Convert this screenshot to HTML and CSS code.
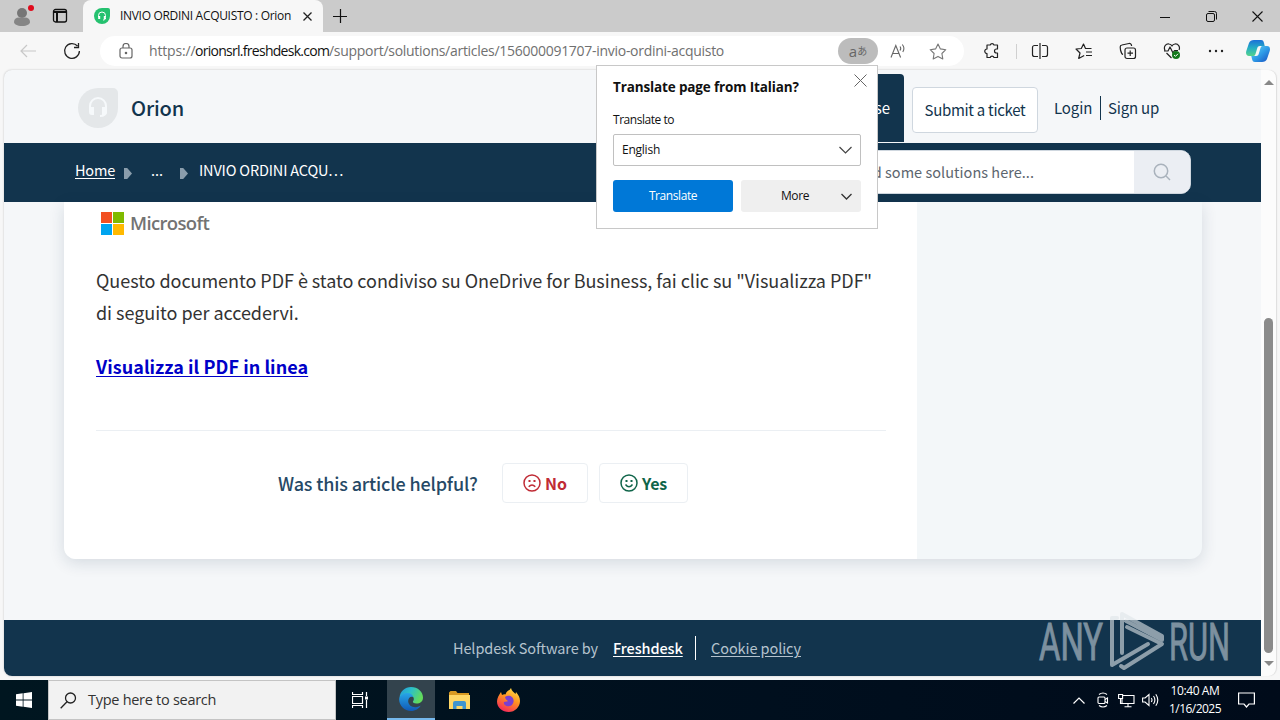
FILE: index.html
```html
<!DOCTYPE html>
<html lang="en">
<head>
<meta charset="utf-8">
<title>INVIO ORDINI ACQUISTO : Orion</title>
<link rel="stylesheet" href="styles.css">
</head>
<body>
<div class="tabbar">
  <div class="tabbar-left">
    <svg class="profile" width="24" height="26" viewBox="0 0 24 26"><circle cx="12" cy="11" r="5" fill="#767676"/><path d="M4 20c0-3 2-4.500 5-4.500h6c3 0 5 1.500 5 4.500 0 2-3 4-8 4s-8-2-8-4z" fill="#858585"/><circle cx="21" cy="6" r="3" fill="#e00b1c"/></svg>
    <svg class="workspaces" width="16" height="16" viewBox="0 0 16 16" fill="none" stroke="#111" stroke-width="1.300"><rect x="1.500" y="1.500" width="13" height="12.500" rx="2"/><path d="M1.500 4h13M5 4v10" stroke-width="2"/></svg>
  </div>
  <div class="tab">
    <svg width="16" height="16" viewBox="0 0 16 16"><path d="M8 0h6a2 2 0 0 1 2 2v6a8 8 0 1 1-8-8z" fill="#25c16f"/><path d="M4.500 9V7.500a3.500 3.500 0 0 1 7 0V9M11.500 10c0 1.500-1 2-2.500 2" fill="none" stroke="#fff" stroke-width="1"/><path d="M4.200 8h2v3h-2zM9.800 8h2v3h-2z" fill="#fff"/></svg>
    <span class="tab-title">INVIO ORDINI ACQUISTO : Orion</span>
    <svg class="tab-x" width="9" height="9" viewBox="0 0 9 9" stroke="#222" stroke-width="1.300"><path d="M.5.5l8 8M8.500.5l-8 8"/></svg>
  </div>
  <svg class="plus" width="14" height="14" viewBox="0 0 14 14" stroke="#111" stroke-width="1.200"><path d="M0 7.500h14M7.500 0v14"/></svg>
  <div class="window-buttons">
    <svg width="11" height="11" viewBox="0 0 11 11" stroke="#111" fill="none"><path d="M0 6.500h10"/></svg>
    <svg width="11" height="11" viewBox="0 0 11 11" stroke="#111" fill="none"><rect x=".5" y="2.500" width="8" height="8" rx="1.500"/><path d="M2.500 .5h6a2 2 0 0 1 2 2v6"/></svg>
    <svg width="11" height="11" viewBox="0 0 11 11" stroke="#111" stroke-width="1.100" fill="none"><path d="M.5.5l10 10M10.500.5l-10 10"/></svg>
  </div>
</div>
<div class="toolbar">
  <svg class="back" width="16" height="14" viewBox="0 0 16 14" fill="none" stroke="#c8c8c8" stroke-width="1.200"><path d="M16 7H1M7 1L1 7l6 6"/></svg>
  <svg class="reload" width="18" height="18" viewBox="0 0 18 18" fill="none" stroke="#222" stroke-width="1.300"><path d="M14.500 4A7.400 7.400 0 1 0 16.400 9M15.500 1v4.500H11"/></svg>
  <div class="address">
    <svg class="lock" width="14" height="16" viewBox="0 0 14 16" fill="none" stroke="#666" stroke-width="1.200"><rect x="1" y="5" width="12" height="10" rx="2"/><path d="M4 5V3.500a3 3 0 0 1 6 0V5"/><circle cx="7" cy="10" r=".7" fill="#666"/></svg>
    <span class="url"><span class="scheme">https://</span><span class="host">orionsrl.freshdesk.com</span><span class="path">/support/solutions/articles/156000091707-invio-ordini-acquisto</span></span>
    <span class="translate-badge"><span class="tb-a">a</span><span class="tb-j">あ</span></span>
    <svg class="read" width="17" height="16" viewBox="0 0 17 16" fill="none" stroke="#666" stroke-width="1.100"><path d="M1 14.500L5.800 2.500l4.800 12M2.700 10.500h6.200M10 3.500q1.500 1.700 0 4M12.300 1.500q3 3.500 .5 7.500"/></svg>
    <svg class="star" width="18" height="17" viewBox="0 0 18 17" fill="none" stroke="#777" stroke-width="1.100" stroke-linejoin="round"><path d="M9 1l2.400 4.900 5.400.8-3.900 3.800.9 5.400L9 13.400l-4.800 2.500.9-5.400L1.200 6.700l5.400-.8z"/></svg>
  </div>
  <div class="actions">
    <svg width="18" height="18" viewBox="0 0 18 18" fill="none" stroke="#222" stroke-width="1.200" stroke-linejoin="round"><path d="M4 3h3.200a2 2 0 0 1 3.800 0h3.500v4h-1a2 2 0 0 0 0 4h1v4.500H11a2 2 0 0 0-3.800 0H4V11.500a2.200 2.200 0 1 1 0-4.500z"/></svg>
    <i class="sep"></i>
    <svg width="18" height="18" viewBox="0 0 18 18" fill="none" stroke="#222" stroke-width="1.200"><path d="M7 3.500H3.500a2 2 0 0 0-2 2v7a2 2 0 0 0 2 2H7M11 3.500h3.500a2 2 0 0 1 2 2v7a2 2 0 0 1-2 2H11M9 1v16"/></svg>
    <svg width="18" height="18" viewBox="0 0 18 18" fill="none" stroke="#222" stroke-width="1.200" stroke-linejoin="round"><path d="M16.500 6.500h-6L8.500 2 6.300 6.500 1 7l4 4-1.300 5.500 5.500-3M11 10h6M11 13.500h6"/></svg>
    <svg width="18" height="18" viewBox="0 0 18 18" fill="none" stroke="#222" stroke-width="1.200"><rect x="6" y="6" width="10.500" height="10.500" rx="2"/><path d="M11.200 8.500v5.500M8.500 11.200H14M4 12.500C2.500 12 2 10 1.500 8L1.200 5a2 2 0 0 1 1.700-2L10 1.500a2 2 0 0 1 2.400 1.500l.2 1"/></svg>
    <svg width="18" height="18" viewBox="0 0 18 18" fill="none" stroke="#222" stroke-width="1.200" stroke-linejoin="round"><path d="M2 8.500C0 4 3.500 1.500 6 2c1.500.2 2.500 1 3 2 .5-1 1.500-1.800 3-2 3-.4 5.500 2.500 4 6M1 9h4l2-4 3 6 1.500-2.500H15M3.500 11l5 5"/><circle cx="13" cy="13" r="4" fill="#14791c" stroke="none"/><path d="M11 13l1.500 1.300 2.500-2.500" stroke="#fff" stroke-width="1"/></svg>
    <svg width="18" height="18" viewBox="0 0 18 18" fill="#222"><circle cx="3" cy="9" r="1.200"/><circle cx="9" cy="9" r="1.200"/><circle cx="15" cy="9" r="1.200"/></svg>
  </div>
  <svg class="copilot" width="24" height="24" viewBox="0 0 24 24"><defs><linearGradient id="ca" x1="0" y1="0" x2="0" y2="1"><stop offset="0" stop-color="#1b70d8"/><stop offset=".5" stop-color="#25aec4"/><stop offset="1" stop-color="#55d38c"/></linearGradient><linearGradient id="cb" x1="0" y1="0" x2="1" y2="1"><stop offset="0" stop-color="#6bd9ef"/><stop offset=".5" stop-color="#2f9de8"/><stop offset="1" stop-color="#174fc0"/></linearGradient></defs><path d="M8 1h7c2 0 2.500 1 3 3l.7 3H14c-2 0-2.500 1-3 3l-1.500 5c-.7 2-1.500 2-3 2H3c-2.500 0-3.500-2-2.700-5L3 4c.8-2 2.500-3 5-3z" fill="url(#ca)"/><path d="M16 23H9c-2 0-2.500-1-3-3l-.7-3H10c2 0 2.500-1 3-3l1.500-5c.7-2 1.500-2 3-2H21c2.500 0 3.500 2 2.700 5L21 20c-.8 2-2.500 3-5 3z" fill="url(#cb)"/></svg>
</div>
<div class="viewport">
  <div class="page">
    <header class="head">
      <svg class="logo" width="40" height="40" viewBox="0 0 40 40"><path d="M20 0h15a5 5 0 0 1 5 5v15A20 20 0 1 1 20 0z" fill="#e4e7e9"/><path d="M12 21v-3a8 8 0 0 1 16 0v3M28 23c0 4-2 5-6 5" fill="none" stroke="#f6f9fb" stroke-width="2"/><path d="M11 19h5v8h-2a3 3 0 0 1-3-3zM24 19h5v5a3 3 0 0 1-3 3h-2z" fill="#f6f9fb"/></svg>
      <span class="brand">Orion</span>
      <nav class="head-nav">
        <span class="kb">Knowledge base</span>
        <span class="submit">Submit a ticket</span>
        <span class="login">Login</span>
        <span class="signup">Sign up</span>
      </nav>
    </header>
    <div class="crumbs">
      <span class="home">Home</span><i class="arrow"></i><span class="dots">...</span><i class="arrow"></i><span class="current">INVIO ORDINI ACQU…</span>
      <div class="search"><div class="search-text">Find some solutions here...</div><div class="search-button"><svg width="18" height="18" viewBox="0 0 18 18" fill="none" stroke="#a9b2bc" stroke-width="1.500"><circle cx="8" cy="8" r="6.700"/><path d="M13 13l4 4"/></svg></div></div>
    </div>
    <main class="content">
      <div class="card">
        <article class="article">
          <div class="ms"><svg width="23" height="23" viewBox="0 0 23 23"><path fill="#f25022" d="M0 0h11v11H0z"/><path fill="#7fba00" d="M12 0h11v11H12z"/><path fill="#00a4ef" d="M0 12h11v11H0z"/><path fill="#ffb900" d="M12 12h11v11H12z"/></svg><span>Microsoft</span></div>
          <p class="text">Questo documento PDF è stato condiviso su OneDrive for Business, fai clic su "Visualizza PDF"<br>di seguito per accedervi.</p>
          <span class="link">Visualizza il PDF in linea</span>
          <div class="feedback">
            <span class="question">Was this article helpful?</span>
            <span class="vote no"><svg width="18" height="18" viewBox="0 0 18 18" fill="none" stroke="currentColor" stroke-width="1.500"><circle cx="9" cy="9" r="8"/><path d="M5.700 12.800q3.300-3.600 6.600 0"/><path d="M5.500 7h2M10.500 7h2" stroke-width="2"/></svg>No</span>
            <span class="vote yes"><svg width="18" height="18" viewBox="0 0 18 18" fill="none" stroke="currentColor" stroke-width="1.500"><circle cx="9" cy="9" r="8"/><path d="M5.500 10.500q3.500 4.600 7 0"/><path d="M5.500 7h2M10.500 7h2" stroke-width="2"/></svg>Yes</span>
          </div>
        </article>
      </div>
    </main>
    <footer class="foot"><span class="by">Helpdesk Software by</span><span class="fd">Freshdesk</span><i></i><span class="cookie">Cookie policy</span></footer>
  </div>
  <div class="scrollbar"><i class="up"></i><i class="thumb"></i><i class="down"></i></div>
</div>
<div class="taskbar">
  <div class="start"><svg width="16" height="16" viewBox="0 0 16 16" fill="#fff"><path d="M0 2.200l6.700-.9v6.300H0zM7.500 1.200L16 0v7.600H7.500zM0 8.400h6.700v6.300L0 13.800zM7.500 8.400H16V16l-8.500-1.200z"/></svg></div>
  <div class="task-search"><svg width="17" height="17" viewBox="0 0 17 17" fill="none" stroke="#222" stroke-width="1.300"><circle cx="10.500" cy="6" r="5"/><path d="M7 9.800L.7 16.300"/></svg><span>Type here to search</span></div>
  <div class="task-item"><svg width="17" height="16" viewBox="0 0 17 16" fill="none" stroke="#fff"><path d="M.5 0v2.500h10V0M.5 16v-2.500h10V16M.5 4.500h10v7H.5zM14.500 0v4M14.500 8v8" stroke-width="1.200"/><path d="M13 6h3" stroke-width="3"/></svg></div>
  <div class="task-item active"><svg width="24" height="24" viewBox="0 0 24 24"><defs><linearGradient id="ea" x1="0" y1="0" x2="1" y2=".4"><stop offset="0" stop-color="#2498dd"/><stop offset=".5" stop-color="#2cc0c8"/><stop offset="1" stop-color="#62db5c"/></linearGradient><linearGradient id="eb" x1="0" y1="0" x2="0" y2="1"><stop offset="0" stop-color="#27a5e8"/><stop offset="1" stop-color="#1159b5"/></linearGradient></defs><path d="M.5 11C1 4 6 0 12 0c7 0 12 5 12 10.500 0 4-3 6-6.500 6-3 0-4-1.300-3.500-2.200 1.200-1.500 1-3 .2-4.300C11 6 4 7 .5 11z" fill="url(#ea)"/><path d="M.2 11.500C1.500 8 5 6 8.500 6c3 0 5 1.500 5.800 4C11 9 9 11.500 9.200 14.500c.3 4 4.500 6.500 8.800 5.500 1.700-.4 2.800-1 3.800-1.500C20 21.500 16.500 24 12 24 5 24-.5 18 .2 11.500z" fill="url(#eb)"/></svg></div>
  <div class="task-item"><svg width="21" height="18" viewBox="0 0 21 18"><path d="M0 1.500L1.500 0H7l1.500 2H20v4H0z" fill="#d99a22"/><path d="M0 4h21v14H0z" fill="#ffd766"/><path d="M4 18v-6a2 2 0 0 1 2-2h9a2 2 0 0 1 2 2v6h-3.500v-3h-6v3z" fill="#3f95d0"/></svg></div>
  <div class="task-item"><svg width="23" height="24" viewBox="0 0 23 24"><defs><linearGradient id="fa" x1=".8" y1="0" x2=".3" y2="1"><stop offset="0" stop-color="#ffe14a"/><stop offset=".45" stop-color="#ff9420"/><stop offset="1" stop-color="#f5265b"/></linearGradient></defs><path d="M4 4l1 3c1-.5 2-.8 3.500-.6C9 4 11 2.500 12.500 2L14 0c.5 3 3 4 4.500 6l.5-2c2.500 3 4 5.500 4 9 0 6-5 11-11.300 11S0 19.500 0 13.500C0 10 2 7 4 4z" fill="url(#fa)"/><path d="M8 9c4-3 9.500 0 8.500 5-.7 3.500-4 5-7 4-2.500-1-3-3-2.500-4l4-.8C10 12 8 11 8 9z" fill="#7a3fd0"/></svg></div>
  <div class="tray">
    <svg width="12" height="7" viewBox="0 0 12 7" fill="none" stroke="#fff" stroke-width="1.200"><path d="M.5 6.500L6 1l5.500 5.500"/></svg>
    <svg class="meet" width="12" height="16" viewBox="0 0 12 16" fill="none" stroke="#fff" stroke-width="1.100"><rect x="1" y="5" width="7" height="6.500" rx="1"/><path d="M8 7.500l2.500-1.500v5L8 9.500M2 2.500Q6-.5 10 2.500M2 13.500q4 3 8 0"/></svg>
    <svg class="network" width="17" height="15" viewBox="0 0 17 15" fill="none" stroke="#fff" stroke-width="1.100"><path d="M5 2.500h11v8H4V6M10 10.500v3M6.500 13.800h7M.6 1.500h4v4h-4zM2.500 5.500v5h2"/></svg>
    <svg class="volume" width="17" height="14" viewBox="0 0 17 14" fill="none" stroke="#fff" stroke-width="1.100"><path d="M.6 5v4h2.500L7 12.500v-11L3.100 5zM9.300 5q1.400 2 0 4M11.500 3q2.800 4 0 8M13.800 1.200q4 5.800 0 11.600"/></svg>
    <div class="clock"><span class="time">10:40 AM</span><span class="date">1/16/2025</span></div>
    <svg class="note" width="17" height="16" viewBox="0 0 17 16" fill="none" stroke="#fff" stroke-width="1.200"><path d="M.6 1h15.800v11H11l-2.500 3L6 12H.6z"/></svg>
  </div>
</div>
<div class="popup">
  <svg class="close" width="13" height="13" viewBox="0 0 13 13" stroke="#666"><path d="M.5.5l12 12M12.500.5l-12 12"/></svg>
  <div class="popup-title">Translate page from Italian?</div>
  <div class="popup-label">Translate to</div>
  <div class="select"><span>English</span><svg width="13" height="8" viewBox="0 0 13 8" fill="none" stroke="#444" stroke-width="1.200"><path d="M.5 1l6 6 6-6"/></svg></div>
  <div class="popup-buttons"><div class="primary">Translate</div><div class="more"><span>More</span><svg width="11" height="7" viewBox="0 0 11 7" fill="none" stroke="#333" stroke-width="1.300"><path d="M.5 1l5 5 5-5"/></svg></div></div>
</div>
<svg class="watermark" width="194" height="64" viewBox="0 0 194 64">
  <g fill="#c3ced6" stroke="#c3ced6" stroke-width=".9" font-family="Roboto" font-weight="400" font-size="52"><text x="1" y="50.500" textLength="64" lengthAdjust="spacingAndGlyphs">ANY</text><text x="131" y="50.500" textLength="61" lengthAdjust="spacingAndGlyphs">RUN</text></g>
  <g fill="none" stroke="#dfe5e9" stroke-width="4" stroke-linejoin="round" stroke-linecap="round"><path d="M79 9h-5v47l36-21M84 44V5l40 22v4L88 12"/><path d="M89 18l35 17-38 24-3-2"/></g>
</svg>
</body>
</html>
```
FILE: styles.css
```css
* { box-sizing: border-box; }
body { margin: 0; width: 1280px; height: 720px; overflow: hidden; position: relative; display: flex; flex-direction: column; background: #f7f7f7; font-family: "Open Sans", "Noto Sans", sans-serif; font-size: 12px; color: #111; }
svg { display: block; flex: none; }
span, .text, .primary { white-space: nowrap; }

.tabbar { height: 32px; flex: none; display: flex; background: #cbcbcb; }
.tabbar-left { width: 83px; display: flex; }
.profile { margin: 2px 0 0 10px; }
.workspaces { margin: 8px 0 0 18px; }
.tab { width: 240px; display: flex; align-items: center; padding: 0 0 0 11px; background: #f7f7f7; border-radius: 8px 8px 0 0; }
.tab-title { margin-left: 10px; width: 171px; font-size: 12px; line-height: 16px; letter-spacing: -.31px; }
.tab-x { margin-left: 12px; }
.plus { margin: 9px 0 0 10px; }
.window-buttons { margin-left: auto; display: flex; align-items: center; gap: 35px; padding-right: 17px; }

.toolbar { height: 38px; flex: none; display: flex; align-items: center; background: #f7f7f7; }
.back { margin-left: 20px; }
.reload { margin-left: 27px; }
.address { width: 864px; height: 30px; margin-left: 19px; border-radius: 15px; background: #fff; display: flex; align-items: center; padding-left: 19px; }
.url { display: flex; width: 575px; margin-left: 16px; font-size: 14px; line-height: 20px; color: #707070; }
.scheme { width: 46px; letter-spacing: -.15px; }
.host { width: 134px; color: #111; letter-spacing: -.72px; }
.path { letter-spacing: -.283px; }
.translate-badge { display: flex; align-items: center; justify-content: center; width: 40px; height: 26px; margin-left: 114px; border-radius: 13px; background: #bcbcbc; color: #666; }
.tb-a { font-size: 15px; line-height: 18px; }
.tb-j { font: 10px/14px "Noto Sans CJK JP", sans-serif; }
.read { margin-left: 12px; }
.star { margin-left: 22px; }
.actions { display: flex; align-items: center; margin-left: 19px; gap: 26px; }
.actions .sep { width: 1px; height: 15px; background: #d0d0d0; margin: 0 -12px 0 -11px; }
.copilot { margin-left: 21px; }

.viewport { height: 610px; flex: none; display: flex; padding: 0 4px 4px; }
.page { width: 1257px; height: 606px; display: flex; flex-direction: column; border-radius: 8px 0 0 8px; overflow: hidden; background: #f5f7f9; font-family: "Noto Sans CJK SC", sans-serif; color: #12344d; box-shadow: 0 0 2px #bbb; }
.head { height: 73px; flex: none; display: flex; align-items: center; padding: 3px 102px 0 74px; }
.brand { margin-left: 13px; font-size: 20px; font-weight: 500; line-height: 28px; letter-spacing: -.16px; }
.head-nav { margin-left: auto; display: flex; align-items: center; font-size: 15px; line-height: 24px; }
.kb { display: flex; align-items: center; justify-content: flex-end; width: 134px; height: 68px; padding-right: 14px; margin-right: 8px; border-radius: 4px 4px 0 0; background: #12344d; color: #fff; }
.submit { display: flex; align-items: center; justify-content: center; width: 126px; height: 46px; margin-top: 3px; border: 1px solid #cfd7df; border-radius: 4px; background: #fff; letter-spacing: -.292px; }
.login { margin-left: 16px; width: 38px; letter-spacing: -.1px; }
.signup { margin-left: 8px; padding-left: 7px; border-left: 1px solid #12344d; width: 59px; letter-spacing: -.2px; }

.crumbs { height: 59px; flex: none; display: flex; align-items: center; padding: 0 70px 0 71px; background: #12344d; color: #fff; font-size: 14.500px; line-height: 24px; }
.home, .dots, .current { padding-bottom: 5px; }
.home { width: 40px; letter-spacing: -.2px; text-decoration: underline; text-underline-offset: 2px; }
.arrow { width: 8px; height: 11px; margin: 2px 0 0 9px; background: #8a9dac; clip-path: polygon(0 0, 40% 0, 100% 50%, 40% 100%, 0 100%); }
.dots { width: 28px; margin-left: 19px; }
.crumbs .dots + .arrow { margin-left: 1px; }
.current { margin-left: 11px; letter-spacing: -.17px; }
.search { display: flex; width: 404px; height: 44px; margin-left: auto; margin-bottom: 1px; border: 1px solid #cfd7df; border-radius: 10px; overflow: hidden; background: #fff; }
.search-text { flex: 1; display: flex; align-items: center; justify-content: flex-end; padding-right: 100px; color: #5c656e; letter-spacing: .03px; }
.search-button { width: 56px; display: flex; align-items: center; justify-content: center; background: #ebeef3; }

.content { height: 418px; flex: none; padding: 0 59px 61px 60px; }
.card { height: 357px; background: #f3f7f9; border-radius: 0 0 12px 12px; box-shadow: 0 4px 16px rgba(18,52,77,.14); overflow: hidden; }
.article { width: 853px; height: 357px; padding: 9px 31px 0 32px; background: #fff; color: #333; }
.ms { display: flex; height: 24px; align-items: center; padding-left: 5px; font: 600 18.500px/24px "Open Sans", sans-serif; letter-spacing: -.65px; color: #737373; }
.ms span { margin-left: 6px; }
.text { margin: 29px 0 0; height: 64px; font-size: 18px; line-height: 32px; letter-spacing: -.038px; }
.link { display: block; width: 212px; margin-top: 22px; font-size: 18px; line-height: 32px; font-weight: 700; letter-spacing: .05px; color: #0000c8; text-decoration: underline; text-decoration-thickness: 1px; text-underline-offset: 2px; }
.feedback { display: flex; align-items: center; margin-top: 48px; padding: 32px 0 0 182px; border-top: 1px solid #ebeff3; }
.question { width: 200px; padding-bottom: 1px; color: #264966; font-size: 18px; line-height: 28px; font-weight: 500; letter-spacing: -.15px; }
.vote { display: flex; align-items: center; height: 40px; border: 1px solid #ebeff3; border-radius: 4px; padding: 0 0 1px 20px; font-size: 16px; line-height: 24px; font-weight: 700; gap: 4px; }
.no { width: 86px; margin-left: 24px; color: #c02b35; }
.yes { width: 89px; margin-left: 11px; color: #10654a; letter-spacing: -.2px; }

.foot { height: 56px; flex: none; display: flex; align-items: center; padding-left: 449px; background: #12344d; color: #b5c3ce; font-size: 14.500px; line-height: 24px; }
.by { width: 145px; letter-spacing: -.11px; }
.fd { width: 70px; margin-left: 15px; color: #fff; font-weight: 500; letter-spacing: -.08px; text-decoration: underline; text-underline-offset: 2px; }
.foot i { width: 1px; height: 24px; margin: 0 15px 0 12px; background: #fff; }
.cookie { letter-spacing: -.08px; text-decoration: underline; text-underline-offset: 2px; }

.scrollbar { width: 15px; height: 606px; display: flex; flex-direction: column; align-items: center; background: #fcfcfc; border-radius: 0 8px 8px 0; box-shadow: 1px 0 1px #ddd; }
.up { margin-top: 10px; border: 5px solid transparent; border-top: 0; border-bottom: 5px solid #888; }
.thumb { width: 9px; height: 335px; margin-top: 233px; border-radius: 5px; background: #8b8b8b; }
.down { margin-top: 8px; border: 5px solid transparent; border-bottom: 0; border-top: 5px solid #888; }

.taskbar { height: 40px; flex: none; display: flex; background: linear-gradient(90deg, #001620, #000f1e 60%, #000b1a); }
.start { width: 48px; display: flex; align-items: center; justify-content: center; }
.task-search { width: 288px; display: flex; align-items: center; padding-left: 11px; background: #f2f2f2; border: 1px solid #c4c4c4; font-size: 14.500px; line-height: 22px; letter-spacing: -.28px; color: #333; }
.task-search span { margin-left: 11px; }
.task-item { width: 49px; display: flex; align-items: center; justify-content: center; }
.active { width: 48px; margin-left: 2px; background: #33434d; border-bottom: 2px solid #76b9ed; }
.tray { margin-left: auto; display: flex; align-items: center; color: #fff; padding-right: 25px; }
.meet { margin-left: 12px; }
.network { margin-left: 9px; }
.volume { margin-left: 7px; }
.clock { display: flex; flex-direction: column; align-items: center; width: 52px; margin-left: 10px; font-size: 12px; line-height: 18px; }
.time { letter-spacing: -.39px; }
.date { letter-spacing: -.538px; }
.note { margin-left: 17px; }

.popup { position: absolute; left: 596px; top: 65px; width: 282px; height: 164px; padding: 11px 16px 12px; background: #fff; border: 1px solid #c8c8c8; font-size: 12px; line-height: 16px; color: #111; }
.close { position: absolute; right: 10px; top: 8px; }
.popup-title { height: 20px; font-size: 13.500px; line-height: 20px; font-weight: 700; letter-spacing: -.14px; }
.popup-label { margin-top: 15px; height: 16px; letter-spacing: -.466px; }
.select { display: flex; align-items: center; justify-content: space-between; height: 32px; margin-top: 6px; padding: 0 8px; border: 1px solid #c0c0c0; border-radius: 2px; letter-spacing: -.24px; }
.popup-buttons { display: flex; gap: 8px; margin-top: 14px; letter-spacing: -.42px; }
.primary, .more { width: 120px; height: 32px; display: flex; align-items: center; border-radius: 3px; }
.primary { justify-content: center; background: #0078d7; color: #fff; }
.more { padding: 0 9px 0 40px; justify-content: space-between; background: #efefef; }
.watermark { position: absolute; left: 1038px; top: 609px; opacity: .6; overflow: visible; }
```
